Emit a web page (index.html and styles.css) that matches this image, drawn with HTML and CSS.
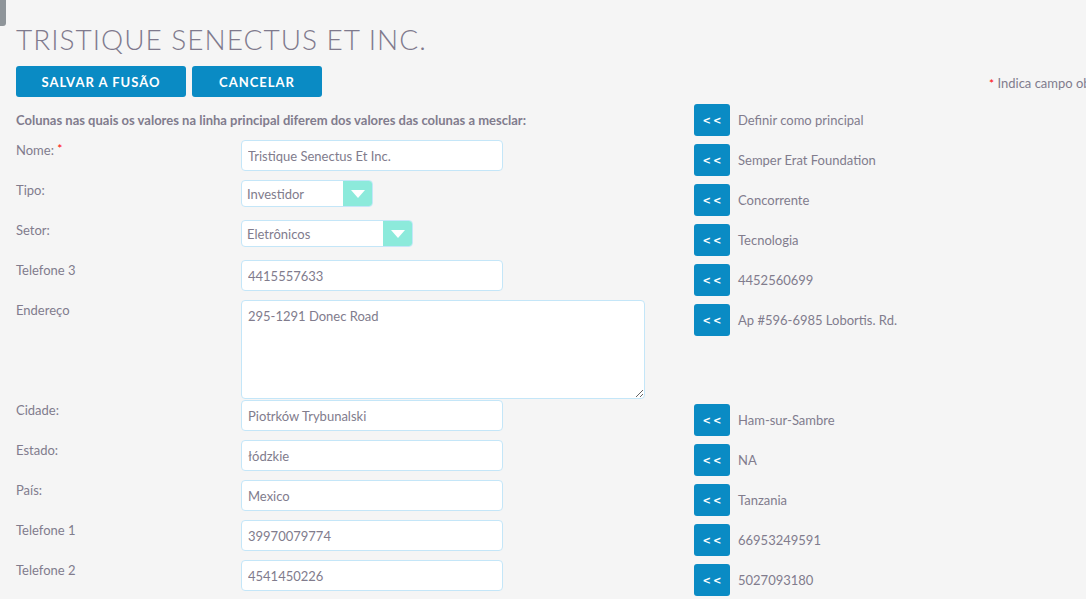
FILE: index.html
```html
<!DOCTYPE html>
<html lang="pt">
<head>
<meta charset="utf-8">
<title>Mesclar registros</title>
<link rel="stylesheet" href="styles.css">
</head>
<body>
<div class="side-tab"></div>
<div class="page">
  <h1 class="title">TRISTIQUE SENECTUS ET INC.</h1>
  <div class="actions">
    <button class="btn btn-save">SALVAR A FUSÃO</button>
    <button class="btn btn-cancel">CANCELAR</button>
    <span class="req-note"><span class="req">*</span> Indica campo obrigatório</span>
  </div>

  <div class="merge">
    <div class="row head">
      <div class="head-text">Colunas nas quais os valores na linha principal diferem dos valores das colunas a mesclar:</div>
      <button class="arrow">&lt;&lt;</button>
      <div class="alt">Definir como principal</div>
    </div>

    <div class="row">
      <div class="label">Nome: <span class="req">*</span></div>
      <div class="field"><input class="input" type="text" value="Tristique Senectus Et Inc."></div>
      <button class="arrow">&lt;&lt;</button>
      <div class="alt">Semper Erat Foundation</div>
    </div>

    <div class="row">
      <div class="label">Tipo:</div>
      <div class="field"><div class="select sel-tipo"><span class="sel-val">Investidor</span><span class="sel-btn"><span class="tri"></span></span></div></div>
      <button class="arrow">&lt;&lt;</button>
      <div class="alt">Concorrente</div>
    </div>

    <div class="row">
      <div class="label">Setor:</div>
      <div class="field"><div class="select sel-setor"><span class="sel-val">Eletrônicos</span><span class="sel-btn"><span class="tri"></span></span></div></div>
      <button class="arrow">&lt;&lt;</button>
      <div class="alt">Tecnologia</div>
    </div>

    <div class="row">
      <div class="label">Telefone 3</div>
      <div class="field"><input class="input" type="text" value="4415557633"></div>
      <button class="arrow">&lt;&lt;</button>
      <div class="alt">4452560699</div>
    </div>

    <div class="row tall">
      <div class="label">Endereço</div>
      <div class="field"><textarea class="textarea">295-1291 Donec Road</textarea></div>
      <button class="arrow">&lt;&lt;</button>
      <div class="alt">Ap #596-6985 Lobortis. Rd.</div>
    </div>

    <div class="row">
      <div class="label">Cidade:</div>
      <div class="field"><input class="input" type="text" value="Piotrków Trybunalski"></div>
      <button class="arrow">&lt;&lt;</button>
      <div class="alt">Ham-sur-Sambre</div>
    </div>

    <div class="row">
      <div class="label">Estado:</div>
      <div class="field"><input class="input" type="text" value="łódzkie"></div>
      <button class="arrow">&lt;&lt;</button>
      <div class="alt">NA</div>
    </div>

    <div class="row">
      <div class="label">País:</div>
      <div class="field"><input class="input" type="text" value="Mexico"></div>
      <button class="arrow">&lt;&lt;</button>
      <div class="alt">Tanzania</div>
    </div>

    <div class="row">
      <div class="label">Telefone 1</div>
      <div class="field"><input class="input" type="text" value="39970079774"></div>
      <button class="arrow">&lt;&lt;</button>
      <div class="alt">66953249591</div>
    </div>

    <div class="row">
      <div class="label">Telefone 2</div>
      <div class="field"><input class="input" type="text" value="4541450226"></div>
      <button class="arrow">&lt;&lt;</button>
      <div class="alt">5027093180</div>
    </div>
  </div>
</div>
</body>
</html>
```

FILE: styles.css
```css
html, body {
  margin: 0;
  padding: 0;
  overflow: hidden;
  background: #f5f5f5;
}
body {
  font-family: Lato, "Open Sans", "Liberation Sans", sans-serif;
  color: #817c8d;
  font-size: 13px;
  width: 1086px;
  height: 599px;
  position: relative;
}
.side-tab {
  position: absolute;
  left: 0;
  top: 0;
  width: 6px;
  height: 26px;
  background: #8f959a;
  border-radius: 0 0 3px 0;
}
.page {
  padding: 0 0 0 16px;
  width: 1153px;
}
.title {
  margin: 0 0 10px 0;
  padding-top: 22px;
  font-weight: 300;
  font-size: 28px;
  line-height: 34px;
  letter-spacing: 1px;
  color: #7f7a8d;
  white-space: nowrap;
}
.actions {
  display: flex;
  align-items: flex-start;
  gap: 6px;
  height: 34px;
}
.btn {
  height: 31px;
  border: none;
  border-radius: 3px;
  background: #0a8bc4;
  color: #fff;
  font-family: Lato, "Open Sans", "Liberation Sans", sans-serif;
  font-weight: 700;
  font-size: 13px;
  letter-spacing: 1px;
  padding: 0;
  cursor: pointer;
}
.btn-save { width: 170px; }
.btn-cancel { width: 130px; }
.req-note {
  margin-left: auto;
  font-size: 13px;
  padding-top: 9px;
  white-space: nowrap;
  width: 180px;
}
.req { color: #ff0000; font-size: 12px; }

.row {
  display: grid;
  grid-template-columns: 225px 453px 36px 1fr;
  height: 40px;
}
.row.tall { height: 100px; }
.head {
  align-items: center;
}
.head-text {
  grid-column: 1 / 3;
  font-weight: 700;
  font-size: 13px;
  white-space: nowrap;
}
.head .arrow { margin-top: 0; }
.head .alt { margin-top: 0; align-self: center; }
.label {
  font-size: 13px;
  line-height: 20px;
}
.label .req { position: relative; top: -2px; }
.field { display: flex; align-items: flex-start; }
.input {
  width: 262px;
  height: 31px;
  box-sizing: border-box;
  border: 1px solid #c4e6f8;
  border-radius: 4px;
  background: #fff;
  padding: 0 6px;
  font-family: Lato, "Open Sans", "Liberation Sans", sans-serif;
  font-size: 13px;
  color: #817c8d;
  outline: none;
}
.textarea {
  width: 404px;
  height: 99px;
  box-sizing: border-box;
  border: 1px solid #c4e6f8;
  border-radius: 4px;
  background: #fff;
  padding: 6px 6px;
  font-family: Lato, "Open Sans", "Liberation Sans", sans-serif;
  font-size: 13px;
  line-height: 18px;
  color: #817c8d;
  outline: none;
  resize: both;
  display: block;
}
.select {
  display: flex;
  height: 27px;
  box-sizing: border-box;
  border: 1px solid #c4e6f8;
  border-radius: 4px;
  background: #fff;
  overflow: hidden;
}
.sel-tipo { width: 132px; }
.sel-setor { width: 172px; }
.sel-val {
  flex: 1;
  padding-left: 5px;
  line-height: 27px;
  font-size: 13px;
}
.sel-btn {
  width: 29px;
  background: #8ceadb;
  display: flex;
  align-items: center;
  justify-content: center;
}
.tri {
  width: 0;
  height: 0;
  border-left: 7px solid transparent;
  border-right: 7px solid transparent;
  border-top: 8px solid #fff;
}
.arrow {
  width: 36px;
  height: 32px;
  margin-top: 4px;
  border: none;
  border-radius: 3px;
  background: #0a8bc4;
  color: #fff;
  font-family: "DejaVu Sans", sans-serif;
  font-weight: 700;
  font-size: 10px;
  letter-spacing: 2px;
  padding: 0 0 0 2px;
}
.alt {
  margin-top: 4px;
  padding-left: 8px;
  line-height: 32px;
  font-size: 13px;
  white-space: nowrap;
}
```
